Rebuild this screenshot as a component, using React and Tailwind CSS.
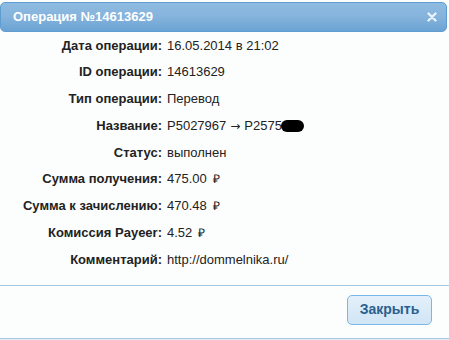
import React from 'react';

const rows = [
    ['Дата операции:', '16.05.2014 в 21:02'],
    ['ID операции:', '14613629'],
    ['Тип операции:', 'Перевод'],
    ['Название:', 'name'],
    ['Статус:', 'выполнен'],
    ['Сумма получения:', '475.00'],
    ['Сумма к зачислению:', '470.48'],
    ['Комиссия Payeer:', '4.52'],
    ['Комментарий:', 'http://dommelnika.ru/'],
];

const Value = ({ v }) => {
    if (v === 'name') {
        return (
            <span className="flex items-center">
                P5027967
                <span className="font-['DejaVu_Sans',sans-serif] text-[12px] mx-[4px]">→</span>
                P2575
                <span className="inline-block w-[23px] h-[12px] rounded-full bg-black ml-[-1px]"></span>
            </span>
        );
    }
    if (/^\d+\.\d\d$/.test(v)) {
        return (
            <span>
                {v}
                <span className="ml-[6px] text-[12px]">₽</span>
            </span>
        );
    }
    return <span>{v}</span>;
};

export default function App() {
    return (
        <div className="w-[449px] h-[340px] bg-[#fcfefd] font-['Liberation_Sans',Arial,sans-serif] flex flex-col overflow-hidden">
            {/* Title bar */}
            <div className="mt-[2px] w-[447px] h-[30px] rounded-[5px] border border-[#5e9cd2] bg-gradient-to-b from-[#8fbbe0] via-[#84b3dc] to-[#6ba3d3] flex items-center justify-between pl-[12px] pr-[8px]">
                <span className="text-white font-bold text-[13px]">Операция №14613629</span>
                <svg width="10" height="10" viewBox="0 0 10 10" className="mr-[1px]">
                    <path d="M1.5 1.5 L8.5 8.5 M8.5 1.5 L1.5 8.5" stroke="#eaf3fb" strokeWidth="2.4" strokeLinecap="round" />
                </svg>
            </div>

            {/* Details */}
            <div className="flex flex-col text-[13px] text-[#222]">
                {rows.map(([label, value]) => (
                    <div key={label} className="h-[26.75px] flex items-center">
                        <span className="w-[162px] text-right font-bold text-[#222]">{label}</span>
                        <span className="ml-[5px]"><Value v={value} /></span>
                    </div>
                ))}
            </div>

            {/* Footer */}
            <div className="mt-[12px] border-t border-[#a6c9e2] flex justify-end pt-[9px] pr-[17px]">
                <button className="w-[85px] h-[30px] rounded-[5px] border border-[#79b7e7] bg-gradient-to-b from-[#e4f0fb] to-[#d0e5f5] text-[#2a5f8e] font-bold text-[14px]">
                    Закрыть
                </button>
            </div>
            <div className="mt-auto h-[2px] border-t border-[#a6c9e2] bg-[#e4eef6]"></div>
        </div>
    );
}
